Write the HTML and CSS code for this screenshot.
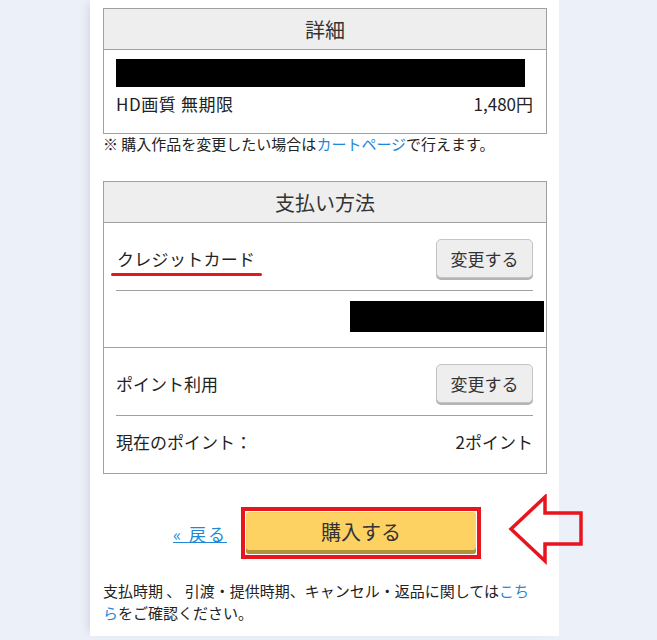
FILE: index.html
```html
<!DOCTYPE html>
<html lang="ja">
<head>
<meta charset="utf-8">
<link rel="stylesheet" href="styles.css">
</head>
<body>
<div class="panel">
  <div class="box">
    <div class="box-head">詳細</div>
    <div class="detail-body">
      <div class="redact redact-title"></div>
      <div class="line">
        <span class="wide">HD画質 無期限</span>
        <span>1,480円</span>
      </div>
    </div>
  </div>
  <p class="note">※ 購入作品を変更したい場合は<a href="#">カートページ</a>で行えます。</p>

  <div class="box box-pay">
    <div class="box-head">支払い方法</div>
    <div class="pay-sec">
      <div class="line">
        <span class="underlined">クレジットカード</span>
        <button class="btn-change">変更する</button>
      </div>
      <div class="sep"></div>
      <div class="redact redact-card"></div>
    </div>
    <div class="pay-sec pay-sec2">
      <div class="line">
        <span>ポイント利用</span>
        <button class="btn-change">変更する</button>
      </div>
      <div class="sep"></div>
      <div class="line line-points">
        <span>現在のポイント：</span>
        <span>2ポイント</span>
      </div>
    </div>
  </div>

  <div class="actions">
    <a href="#" class="back">« 戻る</a>
    <div class="buy-frame"><button class="btn-buy">購入する</button></div>
  </div>

  <p class="footer-note">支払時期 、 引渡・提供時期、キャンセル・返品に関しては<a href="#">こちら</a>をご確認ください。</p>
</div>

<svg class="arrow" width="80" height="72" viewBox="0 0 80 72">
  <polygon points="4,35 38,3 38,19 74,19 74,50 38,50 38,67" fill="none" stroke="#e8141e" stroke-width="3.5" stroke-linejoin="miter"/>
</svg>
</body>
</html>
```

FILE: styles.css
```css
* { box-sizing: border-box; }
html, body {
  margin: 0;
  padding: 0;
}
body {
  background: #ecf0f8;
  font-family: "Noto Sans CJK JP", "Noto Sans", sans-serif;
  color: #333;
  width: 657px;
  height: 640px;
  overflow: hidden;
  position: relative;
}
.panel {
  margin-left: 90px;
  width: 469px;
  height: 636px;
  background: #fff;
  padding: 8px 12px 0 13px;
  box-shadow: -6px 0 8px -4px rgba(160, 170, 190, 0.35);
}
.box {
  border: 1px solid #a0a0a0;
  width: 444px;
}
.box-head {
  background: #eeeeee;
  border-bottom: 1px solid #a0a0a0;
  height: 41px;
  display: flex;
  align-items: center;
  justify-content: center;
  font-size: 20px;
  color: #333;
}
.detail-body {
  padding: 9px 13px 18px 12px;
}
.redact {
  background: #000;
}
.redact-title {
  width: 409px;
  height: 28px;
}
.line {
  display: flex;
  justify-content: space-between;
  align-items: center;
  font-size: 17px;
  color: #222;
}
.wide {
  letter-spacing: 0.6px;
}
.detail-body .line {
  margin-top: 4px;
  height: 24px;
}
.note {
  margin: 0;
  font-size: 15px;
  line-height: 20px;
  color: #222;
}
a {
  color: #1e88d6;
  text-decoration: none;
}
.box-pay {
  margin-top: 27px;
}
.pay-sec {
  padding: 15px 13px 0 12px;
  border-bottom: 1px solid #a0a0a0;
}
.pay-sec .line {
  height: 40px;
}
.underlined {
  position: relative;
  padding-left: 1px;
  letter-spacing: 0.3px;
}
.underlined::after {
  content: "";
  position: absolute;
  left: -5px;
  right: -7px;
  bottom: -5px;
  height: 3px;
  border-radius: 2px;
  background: #e8141e;
}
.btn-change {
  width: 97px;
  height: 39px;
  background: #eeeeee;
  border: 1px solid #c4c4c4;
  border-radius: 5px;
  box-shadow: 0 2px 0 #b4b4b4;
  font-family: inherit;
  font-size: 17px;
  color: #333;
  padding: 0;
}
.sep {
  height: 1px;
  background: #a0a0a0;
  margin-top: 12px;
}
.redact-card {
  width: 194px;
  height: 31px;
  margin: 10px -11px 15px auto;
}
.pay-sec2 {
  border-bottom: none;
  padding-bottom: 0;
}
.pay-sec .line-points {
  height: 50px;
  margin-bottom: 7px;
}
.actions {
  display: flex;
  align-items: center;
  justify-content: center;
  gap: 14px;
  margin-top: 33px;
  padding-left: 4px;
}
.back {
  font-size: 17px;
  letter-spacing: 2px;
  text-decoration: underline;
  color: #1e88d6;
}
.buy-frame {
  border: 4px solid #e8141e;
  padding: 1px;
  width: 240px;
  height: 52px;
}
.btn-buy {
  display: block;
  width: 100%;
  height: 100%;
  background: #fdd263;
  border: none;
  border-radius: 3px;
  box-shadow: inset 0 -4px 0 #b39138;
  font-family: inherit;
  font-size: 20px;
  color: #333;
  padding: 0 0 3px;
}
.footer-note {
  margin: 21px 0 0;
  width: 436px;
  font-size: 15px;
  line-height: 22px;
  color: #222;
}
.arrow {
  position: absolute;
  left: 507px;
  top: 494px;
}
```
